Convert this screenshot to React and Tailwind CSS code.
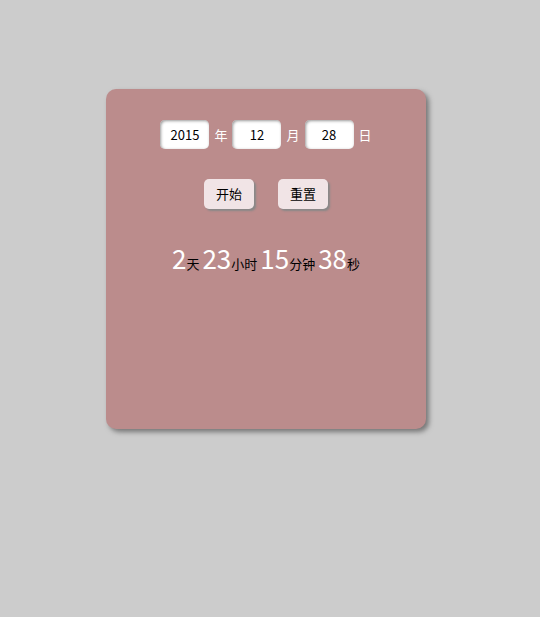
export default function App() {
  const font = { fontFamily: '"Noto Sans CJK SC", "Noto Sans", sans-serif' };
  return (
    <div className="min-h-[617px] w-[540px] bg-[#cccccc] pt-[89px]" style={font}>
      <div className="ml-[106px] h-[340px] w-[320px] rounded-[10px] bg-[#bb8c8c] shadow-[3px_3px_5px_#777]">
        <div className="flex items-center justify-center pt-[31px] text-[13px] text-white">
          <input
            defaultValue="2015"
            className="h-[29px] w-[49px] rounded-[5px] bg-white text-center text-black shadow-[inset_1px_1px_3px_#999] outline-none"
          />
          <span className="mx-[5px]">年</span>
          <input
            defaultValue="12"
            className="h-[29px] w-[49px] rounded-[5px] bg-white text-center text-black shadow-[inset_1px_1px_3px_#999] outline-none"
          />
          <span className="mx-[5px]">月</span>
          <input
            defaultValue="28"
            className="h-[29px] w-[49px] rounded-[5px] bg-white text-center text-black shadow-[inset_1px_1px_3px_#999] outline-none"
          />
          <span className="ml-[5px]">日</span>
        </div>
        <div className="mt-[30px] flex justify-center gap-[24px] text-[13px] text-black">
          <button className="h-[30px] w-[50px] rounded-[5px] bg-[#f1e4e6] shadow-[2px_2px_2px_#888]">开始</button>
          <button className="h-[30px] w-[50px] rounded-[5px] bg-[#f1e4e6] shadow-[2px_2px_2px_#888]">重置</button>
        </div>
        <div className="mt-[36px] flex items-baseline justify-center text-[13px] text-black">
          <span className="text-[26px] leading-none text-white">2</span>天
          <span className="ml-[3px] text-[26px] leading-none text-white">23</span>小时
          <span className="ml-[3px] text-[26px] leading-none text-white">15</span>分钟
          <span className="ml-[3px] text-[26px] leading-none text-white">38</span>秒
        </div>
      </div>
    </div>
  );
}
